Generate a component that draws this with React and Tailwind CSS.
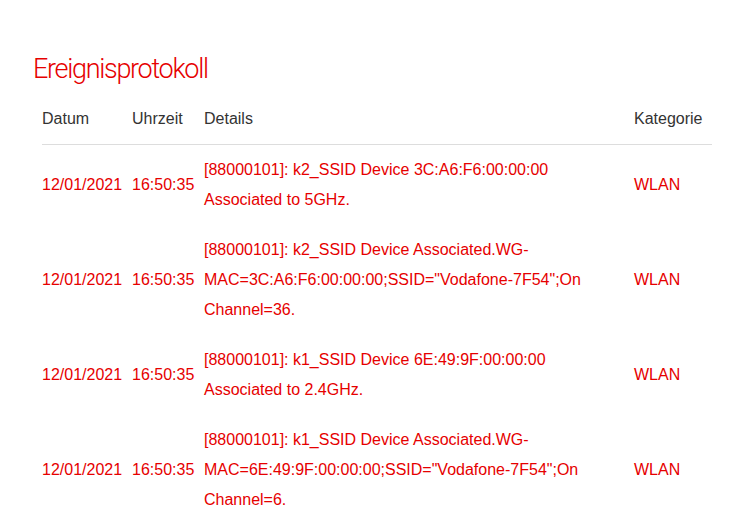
import React from 'react';

const rows = [
  {
    date: '12/01/2021',
    time: '16:50:35',
    details: ['[88000101]: k2_SSID Device 3C:A6:F6:00:00:00', 'Associated to 5GHz.'],
    category: 'WLAN',
  },
  {
    date: '12/01/2021',
    time: '16:50:35',
    details: [
      '[88000101]: k2_SSID Device Associated.WG-',
      'MAC=3C:A6:F6:00:00:00;SSID="Vodafone-7F54";On',
      'Channel=36.',
    ],
    category: 'WLAN',
  },
  {
    date: '12/01/2021',
    time: '16:50:35',
    details: ['[88000101]: k1_SSID Device 6E:49:9F:00:00:00', 'Associated to 2.4GHz.'],
    category: 'WLAN',
  },
  {
    date: '12/01/2021',
    time: '16:50:35',
    details: [
      '[88000101]: k1_SSID Device Associated.WG-',
      'MAC=6E:49:9F:00:00:00;SSID="Vodafone-7F54";On',
      'Channel=6.',
    ],
    category: 'WLAN',
  },
];

const cols = 'grid grid-cols-[90px_72px_430px_1fr]';

export default function App() {
  return (
    <div className="min-h-[521px] bg-white" style={{ fontFamily: '"Liberation Sans", Arial, sans-serif' }}>
      <div className="pl-[33px] pt-[53px]">
        <h1
          className="text-[27px] leading-[32px] font-light tracking-[-1.3px] text-[#e60000]"
          style={{ fontFamily: 'Roboto, sans-serif' }}
        >
          Ereignisprotokoll
        </h1>
      </div>

      <div className="ml-[42px] mt-[9px] w-[670px] text-[16px] leading-[30px]">
        <div className={`${cols} border-b border-[#dddddd] py-[10px] text-[#333333]`}>
          <div>Datum</div>
          <div>Uhrzeit</div>
          <div>Details</div>
          <div>Kategorie</div>
        </div>

        {rows.map((row, i) => (
          <div key={i} className={`${cols} items-center py-[10px] text-[#e60000]`}>
            <div>{row.date}</div>
            <div>{row.time}</div>
            <div className="pr-[10px]">
              {row.details.map((line, j) => (
                <div key={j} className="whitespace-nowrap">{line}</div>
              ))}
            </div>
            <div>{row.category}</div>
          </div>
        ))}
      </div>
    </div>
  );
}
